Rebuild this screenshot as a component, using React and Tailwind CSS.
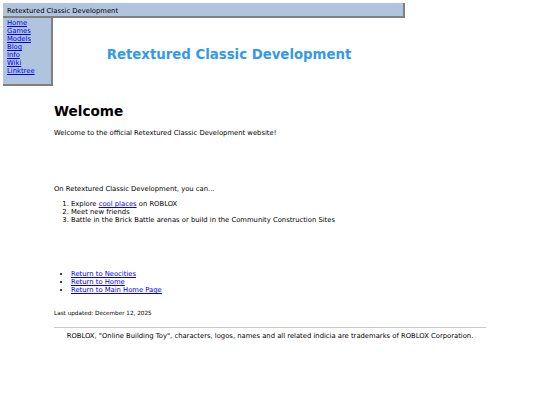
import React from 'react';

const links = ['Home', 'Games', 'Models', 'Blog', 'Info', 'Wiki', 'Linktree'];

export default function App() {
  return (
    <div className="min-h-[405px] bg-white text-black text-[6.8px] leading-[8px]" style={{ fontFamily: '"DejaVu Sans", Verdana, sans-serif' }}>
      <div className="pt-[3px] pl-[3px]">
        <div className="w-[402px] h-[15px] bg-[#b0c4de] border-r-2 border-b-2 border-[#808080] pl-[4px] pt-[2px] flex items-center">
          Retextured Classic Development
        </div>
        <div className="flex w-[402px]">
          <div className="w-[50px] h-[68px] bg-[#b0c4de] border-r-2 border-b-2 border-[#808080] pl-[4px] pt-[1px] flex flex-col">
            {links.map(l => (
              <a key={l} href="#" className="text-[#0000ee] underline leading-[8px]">{l}</a>
            ))}
          </div>
          <div className="flex-1 flex items-center justify-center pt-[5px]">
            <h1 className="text-[#3399ee] font-bold text-[13.3px] leading-[18px]">Retextured Classic Development</h1>
          </div>
        </div>
      </div>

      <div className="pl-[54px] pr-[54px]">
        <h2 className="font-bold text-[13.6px] leading-[20px] mt-[15px]">Welcome</h2>
        <p className="mt-[8px]">Welcome to the official Retextured Classic Development website!</p>
        <p className="mt-[48px]">On Retextured Classic Development, you can...</p>
        <ol className="list-decimal pl-[17px] mt-[7px]">
          <li>Explore <a href="#" className="text-[#0000ee] underline">cool places</a> on ROBLOX</li>
          <li>Meet new friends</li>
          <li>Battle in the Brick Battle arenas or build in the Community Construction Sites</li>
        </ol>
        <ul className="list-disc pl-[17px] mt-[46px]">
          <li><a href="#" className="text-[#0000ee] underline">Return to Neocities</a></li>
          <li><a href="#" className="text-[#0000ee] underline">Return to Home</a></li>
          <li><a href="#" className="text-[#0000ee] underline">Return to Main Home Page</a></li>
        </ul>
        <p className="mt-[15px] text-[5.7px]">Last updated: December 12, 2025</p>
        <hr className="mt-[10px] border-t border-[#c8c8c8]" />
        <p className="mt-[4px] text-center">ROBLOX, "Online Building Toy", characters, logos, names and all related indicia are trademarks of ROBLOX Corporation.</p>
      </div>
    </div>
  );
}
